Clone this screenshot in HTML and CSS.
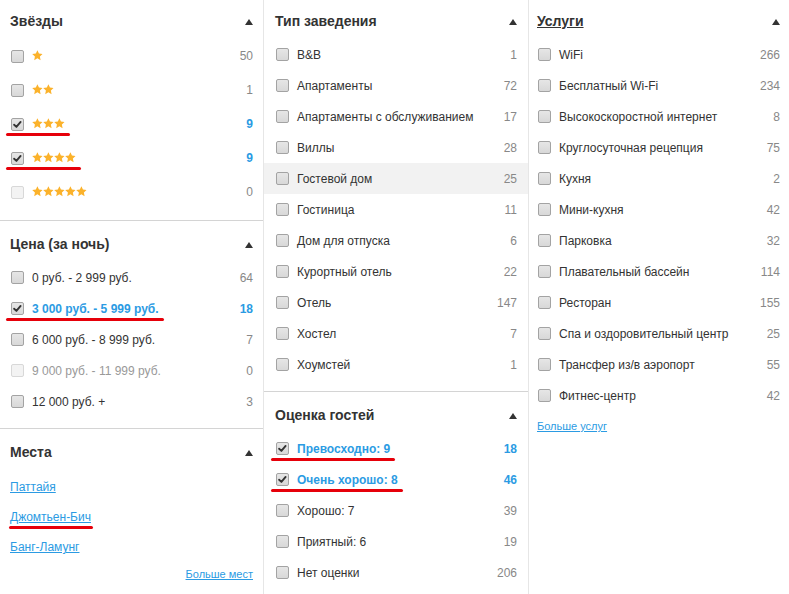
FILE: index.html
```html
<!DOCTYPE html>
<html lang="ru">
  <head>
    <meta charset="UTF-8" />
    <meta name="viewport" content="width=device-width, initial-scale=1.0" />
    <title>Фильтры</title>
    <link rel="stylesheet" href="styles.css">
  </head>
  <body>
    <svg class="defs" width="0" height="0">
      <symbol id="star" viewBox="0 0 10 10">
        <path d="M5 0.2 L6.45 3.3 L9.8 3.7 L7.3 6 L7.95 9.4 L5 7.75 L2.05 9.4 L2.7 6 L0.2 3.7 L3.55 3.3 Z" />
      </symbol>
    </svg>

    <div class="filters">
      <!-- колонка 1 -->
      <div class="col col-1">
        <section class="group">
          <h3 class="group-title">Звёзды <span class="toggle"></span></h3>
          <label class="row row-stars"><span class="opt"><span class="box"></span><span class="stars"><svg><use href="#star"/></svg></span></span><span class="count">50</span></label>
          <label class="row row-stars"><span class="opt"><span class="box"></span><span class="stars"><svg><use href="#star"/></svg><svg><use href="#star"/></svg></span></span><span class="count">1</span></label>
          <label class="row row-stars is-checked"><span class="opt marked"><span class="box"><svg viewBox="0 0 13 13"><path d="M2.5 6.8 L5.2 9.4 L10.2 3.4" /></svg></span><span class="stars"><svg><use href="#star"/></svg><svg><use href="#star"/></svg><svg><use href="#star"/></svg></span></span><span class="count">9</span></label>
          <label class="row row-stars is-checked"><span class="opt marked"><span class="box"><svg viewBox="0 0 13 13"><path d="M2.5 6.8 L5.2 9.4 L10.2 3.4" /></svg></span><span class="stars"><svg><use href="#star"/></svg><svg><use href="#star"/></svg><svg><use href="#star"/></svg><svg><use href="#star"/></svg></span></span><span class="count">9</span></label>
          <label class="row row-stars is-disabled"><span class="opt"><span class="box"></span><span class="stars"><svg><use href="#star"/></svg><svg><use href="#star"/></svg><svg><use href="#star"/></svg><svg><use href="#star"/></svg><svg><use href="#star"/></svg></span></span><span class="count">0</span></label>
        </section>

        <section class="group">
          <h3 class="group-title">Цена (за ночь) <span class="toggle"></span></h3>
          <label class="row"><span class="opt"><span class="box"></span><span class="label">0 руб. - 2 999 руб.</span></span><span class="count">64</span></label>
          <label class="row is-checked"><span class="opt marked"><span class="box"><svg viewBox="0 0 13 13"><path d="M2.5 6.8 L5.2 9.4 L10.2 3.4" /></svg></span><span class="label">3 000 руб. - 5 999 руб.</span></span><span class="count">18</span></label>
          <label class="row"><span class="opt"><span class="box"></span><span class="label">6 000 руб. - 8 999 руб.</span></span><span class="count">7</span></label>
          <label class="row is-disabled"><span class="opt"><span class="box"></span><span class="label">9 000 руб. - 11 999 руб.</span></span><span class="count">0</span></label>
          <label class="row"><span class="opt"><span class="box"></span><span class="label">12 000 руб. +</span></span><span class="count">3</span></label>
        </section>

        <section class="group group-last">
          <h3 class="group-title">Места <span class="toggle"></span></h3>
          <div class="places">
            <div class="place"><a href="#">Паттайя</a></div>
            <div class="place"><a href="#" class="marked">Джомтьен-Бич</a></div>
            <div class="place"><a href="#">Банг-Ламунг</a></div>
          </div>
          <div class="more more-right"><a href="#">Больше мест</a></div>
        </section>
      </div>

      <!-- колонка 2 -->
      <div class="col col-2">
        <section class="group">
          <h3 class="group-title">Тип заведения <span class="toggle"></span></h3>
          <label class="row"><span class="opt"><span class="box"></span><span class="label">B&amp;B</span></span><span class="count">1</span></label>
          <label class="row"><span class="opt"><span class="box"></span><span class="label">Апартаменты</span></span><span class="count">72</span></label>
          <label class="row"><span class="opt"><span class="box"></span><span class="label">Апартаменты с обслуживанием</span></span><span class="count">17</span></label>
          <label class="row"><span class="opt"><span class="box"></span><span class="label">Виллы</span></span><span class="count">28</span></label>
          <label class="row is-hover"><span class="opt"><span class="box"></span><span class="label">Гостевой дом</span></span><span class="count">25</span></label>
          <label class="row"><span class="opt"><span class="box"></span><span class="label">Гостиница</span></span><span class="count">11</span></label>
          <label class="row"><span class="opt"><span class="box"></span><span class="label">Дом для отпуска</span></span><span class="count">6</span></label>
          <label class="row"><span class="opt"><span class="box"></span><span class="label">Курортный отель</span></span><span class="count">22</span></label>
          <label class="row"><span class="opt"><span class="box"></span><span class="label">Отель</span></span><span class="count">147</span></label>
          <label class="row"><span class="opt"><span class="box"></span><span class="label">Хостел</span></span><span class="count">7</span></label>
          <label class="row"><span class="opt"><span class="box"></span><span class="label">Хоумстей</span></span><span class="count">1</span></label>
        </section>

        <section class="group group-last">
          <h3 class="group-title">Оценка гостей <span class="toggle"></span></h3>
          <label class="row is-checked"><span class="opt marked"><span class="box"><svg viewBox="0 0 13 13"><path d="M2.5 6.8 L5.2 9.4 L10.2 3.4" /></svg></span><span class="label">Превосходно: 9</span></span><span class="count">18</span></label>
          <label class="row is-checked"><span class="opt marked"><span class="box"><svg viewBox="0 0 13 13"><path d="M2.5 6.8 L5.2 9.4 L10.2 3.4" /></svg></span><span class="label">Очень хорошо: 8</span></span><span class="count">46</span></label>
          <label class="row"><span class="opt"><span class="box"></span><span class="label">Хорошо: 7</span></span><span class="count">39</span></label>
          <label class="row"><span class="opt"><span class="box"></span><span class="label">Приятный: 6</span></span><span class="count">19</span></label>
          <label class="row"><span class="opt"><span class="box"></span><span class="label">Нет оценки</span></span><span class="count">206</span></label>
        </section>
      </div>

      <!-- колонка 3 -->
      <div class="col col-3">
        <section class="group group-last">
          <h3 class="group-title"><span class="title-link">Услуги</span> <span class="toggle"></span></h3>
          <label class="row"><span class="opt"><span class="box"></span><span class="label">WiFi</span></span><span class="count">266</span></label>
          <label class="row"><span class="opt"><span class="box"></span><span class="label">Бесплатный Wi-Fi</span></span><span class="count">234</span></label>
          <label class="row"><span class="opt"><span class="box"></span><span class="label">Высокоскоростной интернет</span></span><span class="count">8</span></label>
          <label class="row"><span class="opt"><span class="box"></span><span class="label">Круглосуточная рецепция</span></span><span class="count">75</span></label>
          <label class="row"><span class="opt"><span class="box"></span><span class="label">Кухня</span></span><span class="count">2</span></label>
          <label class="row"><span class="opt"><span class="box"></span><span class="label">Мини-кухня</span></span><span class="count">42</span></label>
          <label class="row"><span class="opt"><span class="box"></span><span class="label">Парковка</span></span><span class="count">32</span></label>
          <label class="row"><span class="opt"><span class="box"></span><span class="label">Плавательный бассейн</span></span><span class="count">114</span></label>
          <label class="row"><span class="opt"><span class="box"></span><span class="label">Ресторан</span></span><span class="count">155</span></label>
          <label class="row"><span class="opt"><span class="box"></span><span class="label">Спа и оздоровительный центр</span></span><span class="count">25</span></label>
          <label class="row"><span class="opt"><span class="box"></span><span class="label">Трансфер из/в аэропорт</span></span><span class="count">55</span></label>
          <label class="row"><span class="opt"><span class="box"></span><span class="label">Фитнес-центр</span></span><span class="count">42</span></label>
          <div class="more more-services"><a href="#">Больше услуг</a></div>
        </section>
      </div>
    </div>
  </body>
</html>
```

FILE: styles.css
```css
html {
  box-sizing: border-box;
  font-family: "Liberation Sans", Arial, sans-serif;
  font-size: 12px;
}

*,
*:before,
*:after {
  box-sizing: inherit;
}

body {
  margin: 0;
  padding: 0;
  color: #333;
  background: #fff;
}

a {
  color: #2b9be3;
  text-decoration: underline;
}

.defs {
  position: absolute;
  width: 0;
  height: 0;
}

/* ********** колонки ********** */
.filters {
  display: grid;
  grid-template-columns: 264px 265px 1fr;
  width: 789px;
  height: 594px;
  overflow: hidden;
}

.col {
  border-right: 1px solid #e6e6e6;
}

.col:last-child {
  border-right: none;
}

.col-1 {
  --pl: 10px;
  --pr: 10px;
}

.col-2 {
  --pl: 11px;
  --pr: 11px;
}

.col-3 {
  --pl: 8px;
  --pr: 9px;
}

/* ********** группы ********** */
.group {
  padding: 15px 0 11px;
  border-bottom: 1px solid #d4d4d4;
}

.group:first-child {
  padding-top: 13px;
}

.group-last {
  border-bottom: none;
}

.group > * {
  padding-left: var(--pl);
  padding-right: var(--pr);
}

.group-title {
  display: flex;
  justify-content: space-between;
  align-items: center;
  margin: 0 0 9px;
  font-size: 14px;
  line-height: 17px;
  font-weight: bold;
  color: #333;
}

.title-link {
  text-decoration: underline;
}

.toggle {
  width: 0;
  height: 0;
  border-left: 4px solid transparent;
  border-right: 4px solid transparent;
  border-bottom: 6px solid #333;
}

/* ********** строки ********** */
.row {
  display: flex;
  align-items: center;
  height: 31px;
  cursor: pointer;
}

.row-stars {
  height: 34px;
}

.row.is-hover {
  background: #f2f2f2;
}

.opt {
  position: relative;
  display: inline-flex;
  align-items: center;
  line-height: 14px;
}

.box {
  display: inline-block;
  width: 13px;
  height: 13px;
  margin: 0 8px 0 1px;
  border: 1px solid #a3a3a3;
  border-radius: 2px;
  background: linear-gradient(#e6e6e6, #d8d8d8);
}

.box svg {
  display: block;
  width: 11px;
  height: 11px;
}

.box path {
  fill: none;
  stroke: #333;
  stroke-width: 2.2;
  stroke-linecap: round;
  stroke-linejoin: round;
}

.label {
  color: #333;
}

.stars {
  display: inline-flex;
  gap: 0.2px;
  margin-top: -1px;
}

.stars svg {
  width: 10.8px;
  height: 10.8px;
  fill: #fbb22b;
}

.count {
  margin-left: auto;
  color: #888;
}

.is-checked .label,
.is-checked .count {
  color: #2b9be3;
  font-weight: bold;
}

.is-disabled .box {
  border-color: #d8d8d8;
  background: #f3f3f3;
}

.is-disabled .label {
  color: #999;
}

/* красные пометки */
.marked {
  position: relative;
}

.opt.marked::after {
  content: "";
  position: absolute;
  left: -4px;
  right: -5px;
  bottom: -5px;
  height: 3px;
  border-radius: 2px;
  background: #e6000a;
}

/* ********** места ********** */
.places {
  padding-top: 2px;
}

.place {
  line-height: 30px;
}

.place a {
  display: inline-block;
  line-height: 14px;
}

.place a.marked::after {
  content: "";
  position: absolute;
  left: -1px;
  right: -2px;
  bottom: -5px;
  height: 3px;
  border-radius: 2px;
  background: #e6000a;
}

.more {
  font-size: 11px;
  line-height: 14px;
}

.more-right {
  margin-top: 5px;
  text-align: right;
}

.more-services {
  margin-top: 8px;
}
```
